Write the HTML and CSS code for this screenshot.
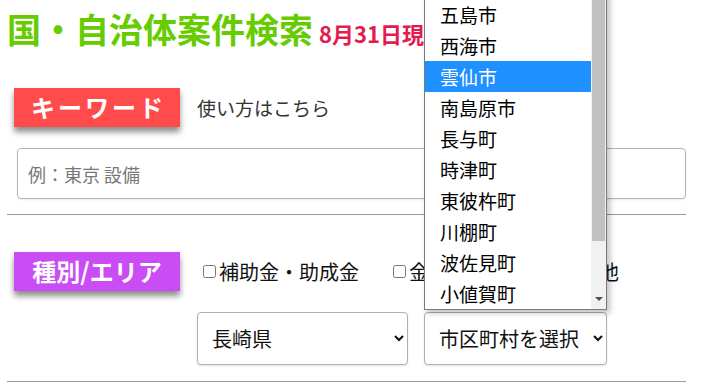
FILE: index.html
```html
<!DOCTYPE html>
<html lang="ja">
<head>
<meta charset="utf-8">
<title>国・自治体案件検索</title>
<link rel="stylesheet" href="styles.css">
</head>
<body>
<div class="page">
  <h1 class="title">国・自治体案件検索<span class="date">8月31日現在</span></h1>

  <section class="block kw-block">
    <div class="head-row">
      <span class="tag tag-red">キーワード</span>
      <a class="help">使い方はこちら</a>
    </div>
    <input class="kw" type="text" placeholder="例：東京 設備">
  </section>

  <hr class="rule">

  <section class="block area-block">
    <div class="head-row">
      <span class="tag tag-purple">種別/エリア</span>
      <div class="checks">
        <label class="chk"><input type="checkbox">補助金・助成金</label>
        <label class="chk"><input type="checkbox">金融・税制</label>
        <label class="chk"><input type="checkbox">その他</label>
      </div>
    </div>
    <div class="selects">
      <select class="sel sel-pref"><option>長崎県</option></select>
      <select class="sel sel-city"><option>市区町村を選択</option></select>
    </div>
  </section>

  <hr class="rule">

  <div class="popup">
    <ul class="opts">
      <li>壱岐市</li>
      <li>五島市</li>
      <li>西海市</li>
      <li class="on">雲仙市</li>
      <li>南島原市</li>
      <li>長与町</li>
      <li>時津町</li>
      <li>東彼杵町</li>
      <li>川棚町</li>
      <li>波佐見町</li>
      <li>小値賀町</li>
    </ul>
    <div class="sbar">
      <div class="thumb"></div>
      <div class="arrow"></div>
    </div>
  </div>
</div>
</body>
</html>
```

FILE: styles.css
```css
* { box-sizing: border-box; }
html, body { margin: 0; padding: 0; background: #fff; }
body {
  font-family: "Noto Sans CJK JP", "Noto Sans", sans-serif;
  color: #222;
  overflow: hidden;
}
.page {
  position: relative;
  width: 701px;
  height: 389px;
  padding: 0 15px 0 7px;
}
.title {
  margin: 0;
  padding: 5px 0 0 0;
  font-size: 34px;
  line-height: 48px;
  font-weight: 700;
  color: #66cc00;
  white-space: nowrap;
}
.date {
  font-size: 22px;
  color: #e31b4f;
  margin-left: 6px;
}
.block { padding-left: 7px; }
.head-row {
  display: flex;
  align-items: center;
}
.kw-block { margin-top: 31px; }
.tag {
  display: inline-block;
  width: 166px;
  height: 39px;
  color: #fff;
  font-size: 24px;
  font-weight: 700;
  line-height: 38px;
  text-align: center;
  box-shadow: 0 5px 6px rgba(0, 0, 0, 0.45);
}
.tag-red {
  background: #ff4b4b;
  letter-spacing: 3px;
  text-indent: 3px;
}
.tag-purple {
  background: #c94cf5;
}
.help {
  margin-left: 17px;
  font-size: 19px;
  color: #333;
}
.kw {
  display: block;
  margin: 21px 0 0 3px;
  width: 669px;
  height: 51px;
  border: 1px solid #b5b5b5;
  border-radius: 4px;
  padding: 0 10px;
  font-family: inherit;
  font-size: 18px;
  box-shadow: 0 1px 2px rgba(0,0,0,0.08);
}
.kw::placeholder { color: #777; }
.rule {
  margin: 15px 0 0 0;
  border: 0;
  border-top: 1px solid #9a9a9a;
  width: 679px;
}
.area-block { margin-top: 37px; }
.checks {
  display: flex;
  gap: 34px;
  margin-left: 23px;
}
.chk {
  display: flex;
  align-items: center;
  font-size: 20px;
  color: #111;
  white-space: nowrap;
}
.chk input {
  width: 13px;
  height: 13px;
  margin: 0 3px 0 0;
}
.selects {
  display: flex;
  gap: 16px;
  margin: 21px 0 0 183px;
}
.sel {
  height: 53px;
  border: 1px solid #b0b0b0;
  border-radius: 4px;
  background: #fff;
  font-family: inherit;
  font-size: 20px;
  color: #111;
  padding: 0 6px 0 10px;
  box-shadow: 0 1px 2px rgba(0,0,0,0.12);
}
.sel-pref { width: 211px; }
.sel-city { width: 183px; }
.area-block + .rule { margin-top: 16px; }

.popup {
  position: absolute;
  left: 424px;
  top: -33px;
  width: 183px;
  height: 343px;
  background: #fff;
  border: 1px solid #7a7a7a;
  box-shadow: 3px 3px 6px rgba(0,0,0,0.25);
  overflow: hidden;
  display: flex;
}
.opts {
  list-style: none;
  margin: 0;
  padding: 0;
  flex: 1;
}
.opts li {
  height: 31px;
  line-height: 31px;
  padding-left: 15px;
  font-size: 19px;
  color: #000;
  white-space: nowrap;
}
.opts li.on {
  background: #1e90ff;
  color: #fff;
}
.sbar {
  position: relative;
  width: 15px;
  background: #f1f1f1;
}
.thumb {
  position: absolute;
  left: 1px;
  right: 1px;
  top: 0;
  height: 273px;
  background: #c1c1c1;
}
.arrow {
  position: absolute;
  left: 4px;
  bottom: 8px;
  width: 0;
  height: 0;
  border-left: 4px solid transparent;
  border-right: 4px solid transparent;
  border-top: 4px solid #505050;
}
```
